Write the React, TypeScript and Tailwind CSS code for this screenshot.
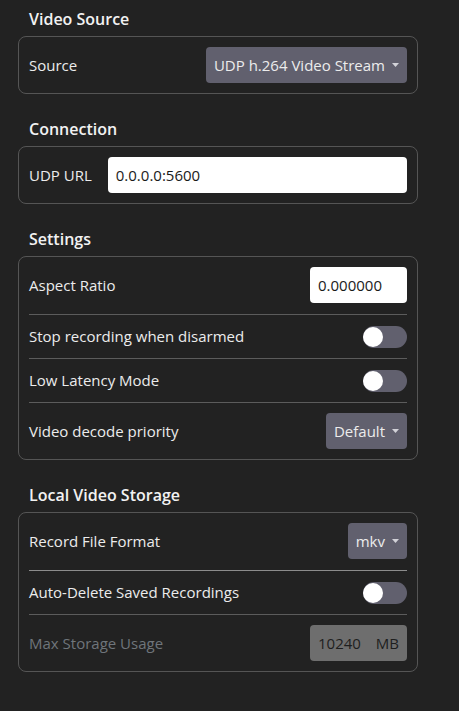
import * as React from "react";

const font = { fontFamily: '"Open Sans", "Noto Sans", sans-serif' };

function Section({ title, children }: { title: string; children: React.ReactNode }) {
  return (
    <div className="flex flex-col gap-[6px]">
      <div className="pl-[11px] text-[16px] leading-[22px] font-semibold text-[#f2f2f2]">{title}</div>
      <div className="w-[400px] rounded-[8px] border border-[#555555] px-[10px] py-[10px] flex flex-col">
        {children}
      </div>
    </div>
  );
}

function Divider({ light }: { light?: boolean }) {
  return <div className={`h-px my-[10px] ${light ? "bg-[#8c8c8c]" : "bg-[#5c5c5c]"}`} />;
}

function Row({ label, dim, extra, children }: { label: string; dim?: boolean; extra?: string; children: React.ReactNode }) {
  return (
    <div className={`flex items-center justify-between min-h-[23px] ${extra ?? ""}`}>
      <span className={`text-[15px] ${dim ? "text-[#6f757b]" : "text-[#ececec]"}`}>{label}</span>
      {children}
    </div>
  );
}

function Combo({ value }: { value: string }) {
  return (
    <div className="h-[36px] rounded-[4px] bg-[#61606e] flex items-center pl-[8px] pr-[8px] gap-[7px] text-[15px] text-[#ececec]">
      <span>{value}</span>
      <svg width="7" height="4" viewBox="0 0 7 4">
        <path d="M0 0 L7 0 L3.5 4 Z" fill="#d2d2d8" />
      </svg>
    </div>
  );
}

function Toggle() {
  return (
    <div className="relative w-[44px] h-[22px] rounded-full bg-[#61606e]">
      <div className="absolute left-0 top-px w-[20px] h-[20px] rounded-full bg-white" />
    </div>
  );
}

function TextField({ value, width }: { value: string; width: string }) {
  return (
    <div className={`h-[36px] ${width} rounded-[4px] bg-white flex items-center px-[8px] text-[15px] text-[#1a1a1a]`}>
      {value}
    </div>
  );
}

export default function App() {
  return (
    <div className="min-h-screen bg-[#222222] pl-[18px] pt-[8px] flex flex-col gap-[24px]" style={font}>
      <Section title="Video Source">
        <div className="flex items-center justify-between">
          <span className="text-[15px] text-[#ececec]">Source</span>
          <Combo value="UDP h.264 Video Stream" />
        </div>
      </Section>

      <Section title="Connection">
        <div className="flex items-center gap-[16px]">
          <span className="text-[15px] text-[#ececec]">UDP URL</span>
          <div className="flex-1">
            <TextField value="0.0.0.0:5600" width="w-full" />
          </div>
        </div>
      </Section>

      <Section title="Settings">
        <Row label="Aspect Ratio" extra="pb-[1px]">
          <TextField value="0.000000" width="w-[97px]" />
        </Row>
        <Divider />
        <Row label="Stop recording when disarmed">
          <Toggle />
        </Row>
        <Divider />
        <Row label="Low Latency Mode">
          <Toggle />
        </Row>
        <Divider />
        <Row label="Video decode priority">
          <Combo value="Default" />
        </Row>
      </Section>

      <Section title="Local Video Storage">
        <Row label="Record File Format" extra="pb-px">
          <Combo value="mkv" />
        </Row>
        <Divider light />
        <Row label="Auto-Delete Saved Recordings">
          <Toggle />
        </Row>
        <Divider />
        <Row label="Max Storage Usage" dim>
          <div className="h-[36px] w-[97px] rounded-[4px] bg-[#6e6e6e] flex items-center justify-between px-[8px] text-[15px] text-[#1e1e1e]">
            <span>10240</span>
            <span>MB</span>
          </div>
        </Row>
      </Section>
    </div>
  );
}
